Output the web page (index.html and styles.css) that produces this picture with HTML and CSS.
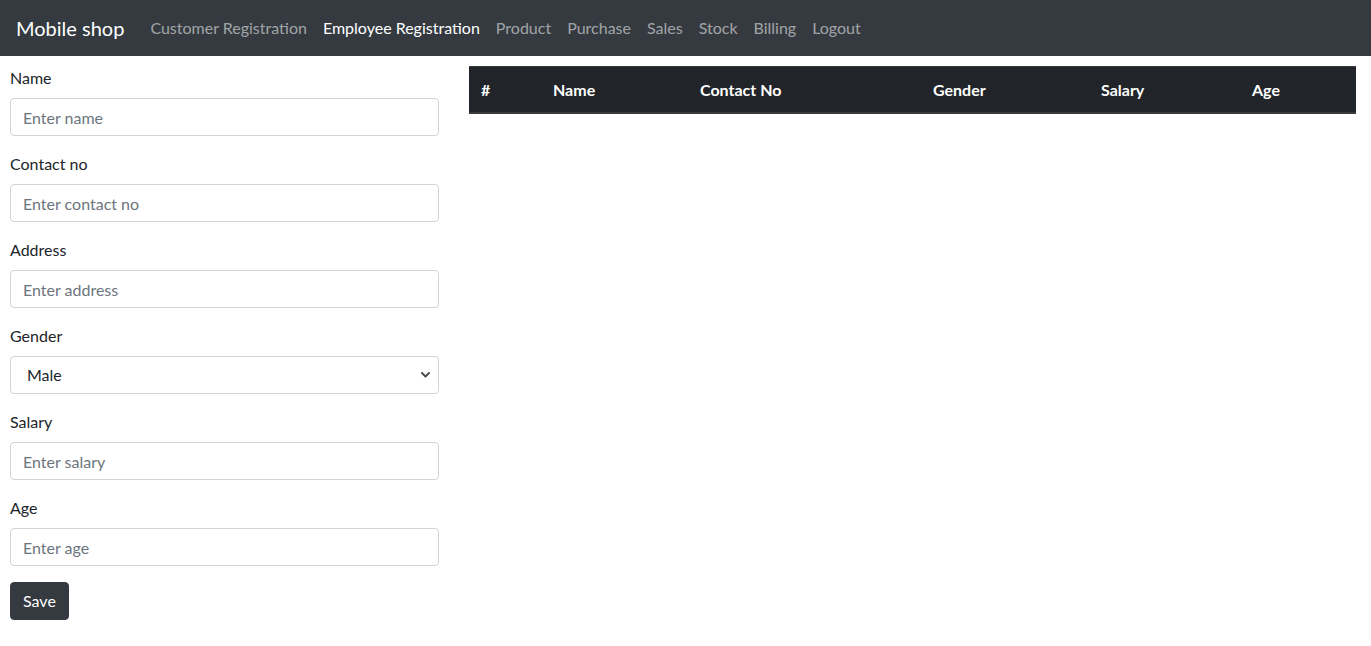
FILE: index.html
```html
<!DOCTYPE html>
<html lang="en">
<head>
<meta charset="utf-8">
<title>Mobile shop</title>
<link rel="stylesheet" href="styles.css">
</head>
<body>
<nav class="navbar">
  <a class="brand" href="#">Mobile shop</a>
  <ul class="nav">
    <li><a class="nav-link" href="#">Customer Registration</a></li>
    <li><a class="nav-link active" href="#">Employee Registration</a></li>
    <li><a class="nav-link" href="#">Product</a></li>
    <li><a class="nav-link" href="#">Purchase</a></li>
    <li><a class="nav-link" href="#">Sales</a></li>
    <li><a class="nav-link" href="#">Stock</a></li>
    <li><a class="nav-link" href="#">Billing</a></li>
    <li><a class="nav-link" href="#">Logout</a></li>
  </ul>
</nav>
<main class="page">
  <form class="form-col">
    <div class="group">
      <label class="label" for="name">Name</label>
      <input class="control" id="name" type="text" placeholder="Enter name">
    </div>
    <div class="group">
      <label class="label" for="contact">Contact no</label>
      <input class="control" id="contact" type="text" placeholder="Enter contact no">
    </div>
    <div class="group">
      <label class="label" for="address">Address</label>
      <input class="control" id="address" type="text" placeholder="Enter address">
    </div>
    <div class="group">
      <label class="label" for="gender">Gender</label>
      <div class="select-wrap">
        <select class="control select" id="gender">
          <option>Male</option>
          <option>Female</option>
        </select>
        <svg class="chev" width="9" height="6" viewBox="0 0 9 6"><path d="M1 1l3.5 3.5L8 1" fill="none" stroke="#4a4f55" stroke-width="2" stroke-linecap="round" stroke-linejoin="round"/></svg>
      </div>
    </div>
    <div class="group">
      <label class="label" for="salary">Salary</label>
      <input class="control" id="salary" type="text" placeholder="Enter salary">
    </div>
    <div class="group">
      <label class="label" for="age">Age</label>
      <input class="control" id="age" type="text" placeholder="Enter age">
    </div>
    <button class="btn" type="button">Save</button>
  </form>
  <section class="table-col">
    <table class="table">
      <thead>
        <tr>
          <th class="c-num">#</th>
          <th class="c-name">Name</th>
          <th class="c-contact">Contact No</th>
          <th class="c-gender">Gender</th>
          <th class="c-salary">Salary</th>
          <th class="c-age">Age</th>
        </tr>
      </thead>
      <tbody></tbody>
    </table>
  </section>
</main>
</body>
</html>
```
FILE: styles.css
```css
* { box-sizing: border-box; }
html, body { margin: 0; padding: 0; }
body {
  font-family: "Lato", "Noto Sans", sans-serif;
  font-size: 16px;
  line-height: 1.5;
  color: #212529;
  background: #fff;
}
.navbar {
  height: 56px;
  background: #343a40;
  display: flex;
  align-items: center;
  padding: 0 16px;
}
.brand {
  color: #fff;
  text-decoration: none;
  font-size: 20px;
  margin-right: 18px;
}
.nav {
  list-style: none;
  margin: 0;
  padding: 0;
  display: flex;
}
.nav-link {
  display: block;
  padding: 8px;
  color: rgba(255,255,255,.55);
  text-decoration: none;
}
.nav-link.active { color: #fff; }
.page {
  display: flex;
  gap: 30px;
  padding: 10px 15px 10px 10px;
}
.form-col {
  width: 429px;
  flex: none;
}
.group { margin-bottom: 16px; }
.label {
  display: block;
  margin-bottom: 8px;
}
.control {
  display: block;
  width: 100%;
  height: 38px;
  padding: 6px 12px;
  font: inherit;
  color: #212529;
  background: #fff;
  border: 1px solid #ced4da;
  border-radius: 4px;
  outline: none;
}
.control::placeholder { color: #6c757d; }
.select-wrap { position: relative; }
.select {
  appearance: none;
  -webkit-appearance: none;
  padding-left: 16px;
}
.chev {
  position: absolute;
  right: 9px;
  top: 16px;
  pointer-events: none;
}
.btn {
  height: 38px;
  padding: 6px 12px;
  font: inherit;
  color: #fff;
  background: #343a40;
  border: 1px solid #343a40;
  border-radius: 4px;
}
.table-col {
  flex: 1;
}
.table {
  width: 100%;
  border-collapse: collapse;
  border-top: 1px solid #373b3e;
}
.table th {
  background: #212529;
  color: #fff;
  font-weight: 700;
  text-align: left;
  padding: 11px 12px 10px;
  border-bottom: 2px solid #373b3e;
  line-height: 24px;
}
.c-num { width: 72px; }
.c-name { width: 147px; }
.c-contact { width: 233px; }
.c-gender { width: 168px; }
.c-salary { width: 151px; }
.c-age { width: 116px; }
```
